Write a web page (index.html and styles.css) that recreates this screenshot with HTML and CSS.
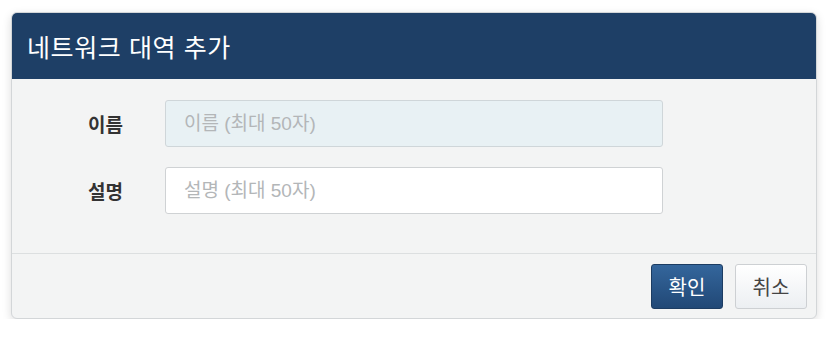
FILE: index.html
```html
<!DOCTYPE html>
<html lang="ko">
<head>
<meta charset="utf-8">
<link rel="stylesheet" href="styles.css">
</head>
<body>
<div class="modal">
  <div class="modal-header">
    <h3 class="modal-title">네트워크 대역 추가</h3>
  </div>
  <div class="modal-body">
    <div class="form-row">
      <label class="form-label">이름</label>
      <input class="form-input form-input-active" type="text" placeholder="이름 (최대 50자)">
    </div>
    <div class="form-row">
      <label class="form-label">설명</label>
      <input class="form-input" type="text" placeholder="설명 (최대 50자)">
    </div>
  </div>
  <div class="modal-footer">
    <button class="btn btn-primary">확인</button>
    <button class="btn btn-default">취소</button>
  </div>
</div>
</body>
</html>
```
FILE: styles.css
```css
html, body {
  margin: 0;
  padding: 0;
  background: #ffffff;
}
body {
  padding: 12px 0 0 11px;
  font-family: "Liberation Sans", "Noto Sans CJK KR", sans-serif;
}
.modal {
  width: 806px;
  height: 307px;
  box-sizing: border-box;
  border-radius: 6px;
  border: 1px solid #d3d6d8;
  background: #f3f4f4;
  box-shadow: 0 3px 10px rgba(0, 0, 0, 0.14);
  display: flex;
  flex-direction: column;
  overflow: hidden;
}
.modal-header {
  background: #1e3f66;
  height: 67px;
  flex: none;
  display: flex;
  align-items: center;
  padding-left: 16px;
  margin: -1px -1px 0 -1px;
}
.modal-title {
  margin: 0;
  color: #ffffff;
  font-size: 25px;
  font-weight: 400;
  letter-spacing: 0.6px;
}
.modal-body {
  flex: 1;
  padding: 21px 0 0 0;
  display: flex;
  flex-direction: column;
  gap: 20px;
}
.form-row {
  display: flex;
  align-items: center;
}
.form-label {
  width: 153px;
  box-sizing: border-box;
  padding-left: 76px;
  font-size: 19px;
  font-weight: 700;
  color: #333333;
}
.form-input {
  width: 498px;
  height: 47px;
  box-sizing: border-box;
  border: 1px solid #cfd2d4;
  border-radius: 3px;
  background: #ffffff;
  padding: 0 18px;
  font-family: "Liberation Sans", "Noto Sans CJK KR", sans-serif;
  font-size: 19px;
  color: #555555;
  outline: none;
}
.form-input::placeholder {
  color: #b3b6b8;
}
.form-input-active {
  background: #e8f1f4;
  border-color: #cfd6d9;
}
.modal-footer {
  flex: none;
  height: 64px;
  border-top: 1px solid #dcdfe0;
  display: flex;
  align-items: center;
  justify-content: flex-end;
  gap: 12px;
  padding-right: 9px;
}
.btn {
  width: 72px;
  height: 45px;
  box-sizing: border-box;
  border-radius: 3px;
  font-family: "Liberation Sans", "Noto Sans CJK KR", sans-serif;
  font-size: 20px;
  padding: 0;
  cursor: pointer;
}
.btn-primary {
  background: linear-gradient(#34669c, #214876);
  border: 1px solid #1c3c62;
  color: #ffffff;
}
.btn-default {
  background: linear-gradient(#ffffff, #eceff2);
  border: 1px solid #cdd0d3;
  color: #444444;
}
```
